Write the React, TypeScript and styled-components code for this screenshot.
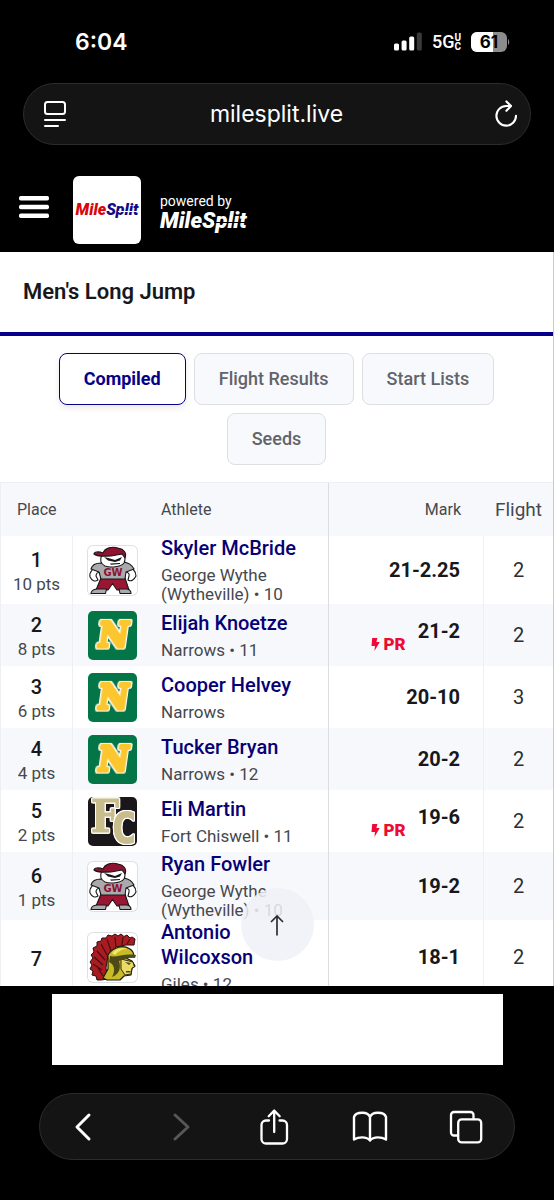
import React from "react";
import styled, { createGlobalStyle, css } from "styled-components";

const GlobalStyle = createGlobalStyle`
  *, *::before, *::after { box-sizing: border-box; }
  body {
    margin: 0;
    background: #000;
    font-family: Roboto, "Liberation Sans", sans-serif;
    color: #17181c;
  }
  button, input { font: inherit; }
`;

const Screen = styled.div`
  display: flex;
  flex-direction: column;
  height: 100vh;
  background: #000;
`;

/* ---------- phone status bar ---------- */

const StatusBar = styled.div`
  display: flex;
  align-items: center;
  justify-content: space-between;
  height: 83px;
  padding: 0 44px 0 75px;
  color: #fff;
`;

const Clock = styled.time`
  font-family: Inter, sans-serif;
  font-size: 23px;
  line-height: 28px;
  font-weight: 600;
`;

const StatusIcons = styled.div`
  display: flex;
  align-items: center;
  gap: 10px;
`;

const Network = styled.span`
  display: flex;
  align-items: center;
  font-size: 18px;
  line-height: 20px;
  font-weight: 500;
`;

const NetworkBand = styled.span`
  display: flex;
  flex-direction: column;
  font-size: 10px;
  line-height: 9px;
  font-weight: 700;
`;

/* ---------- browser chrome ---------- */

const AddressBar = styled.div`
  display: flex;
  align-items: center;
  height: 62px;
  margin: 0 23px;
  padding: 0 12px 0 19px;
  border: 1px solid #2c2c2c;
  border-radius: 31px;
  background: #141414;
`;

const Address = styled.input`
  flex: 1;
  min-width: 0;
  padding: 0 8px 0 0;
  border: 0;
  background: none;
  color: #fff;
  font-family: Inter, sans-serif;
  font-size: 23px;
  line-height: 30px;
  text-align: center;
`;

const IconButton = styled.button`
  display: flex;
  padding: 0;
  border: 0;
  background: none;
  color: #fff;
  &:disabled { color: #57575a; }
`;

const MenuButton = styled(IconButton)`
  margin-bottom: 6px;
`;

const BottomArea = styled.footer`
  flex: none;
  padding: 8px 39px 40px;
`;

const AdSlot = styled.div`
  height: 71px;
  margin: 0 12px 28px 13px;
  background: #fff;
`;

const Toolbar = styled.nav`
  display: flex;
  align-items: center;
  justify-content: space-between;
  height: 67px;
  padding: 0 31px 0 28px;
  border: 1px solid #2c2c2c;
  border-radius: 34px;
  background: #141414;
`;

/* ---------- site ---------- */

const SiteHeader = styled.header`
  flex: none;
  display: flex;
  align-items: center;
  padding: 31px 19px 8px;
`;

const LogoTile = styled.a`
  display: flex;
  align-items: center;
  justify-content: center;
  width: 68px;
  height: 68px;
  margin: 0 19px 0 24px;
  border-radius: 6px;
  background: #fff;
  text-decoration: none;
`;

const Powered = styled.div`
  display: flex;
  flex-direction: column;
  padding-top: 2px;
  color: #fff;
  font-size: 14px;
  line-height: 20px;
`;

const Wordmark = styled.span<{ $size: number; $first: string; $second: string; $cut: string }>`
  display: flex;
  font-size: ${(p) => p.$size}px;
  line-height: 20px;
  font-weight: 900;
  font-style: italic;
  color: ${(p) => p.$first};
  span {
    position: relative;
    color: ${(p) => p.$second};
  }
  span::after {
    content: "";
    position: absolute;
    inset: 11px 0 auto 12px;
    height: 1px;
    background: ${(p) => p.$cut};
  }
`;

const Page = styled.main`
  position: relative;
  flex: 1;
  min-height: 0;
  overflow: hidden;
  background: #fff;
  border-right: 1px solid #c9cacd;
`;

const TitleBar = styled.div`
  padding: 26px 23px;
  border-bottom: 4px solid #06008a;
`;

const Title = styled.h1`
  margin: 0;
  font-size: 22px;
  line-height: 28px;
  font-weight: 600;
`;

const Tabs = styled.div`
  display: flex;
  flex-wrap: wrap;
  justify-content: center;
  gap: 8px;
  padding: 17px 20px;
`;

const Tab = styled.button<{ $active?: boolean }>`
  height: 52px;
  padding: 0 24px;
  border: 1px solid #dedfe3;
  border-radius: 8px;
  background: #f8f9fd;
  color: #62646a;
  font-size: 18px;
  line-height: 24px;
  font-weight: 500;
  ${(p) =>
    p.$active &&
    css`
      border-color: #06008a;
      background: #fff;
      color: #06008a;
      font-weight: 700;
      box-shadow: 0 3px 6px rgba(0, 0, 0, 0.09);
    `}
`;

const Results = styled.table`
  width: 100%;
  border-collapse: separate;
  border-spacing: 0;
  table-layout: fixed;
  border-top: 1px solid #eeeff2;
  border-left: 1px solid #eeeff2;
  th, td { padding: 0; vertical-align: middle; }
  tr { height: 62px; }
  tbody tr:nth-child(even), thead tr { background: #f7f8fc; }
  thead tr { height: 53px; }
`;

const Col = styled.col<{ $w?: number }>`
  ${(p) => p.$w && `width: ${p.$w}px;`}
`;

const Head = styled.th<{ $align?: string; $size?: number; $divide?: boolean }>`
  color: #46484e;
  font-size: ${(p) => p.$size ?? 16}px;
  line-height: 24px;
  font-weight: 400;
  text-align: ${(p) => p.$align ?? "left"};
  ${(p) => p.$divide && "border-right: 1px solid #dcdde1;"}
  &:first-child { padding-left: 16px; }
  &:nth-child(3) { padding-right: 23px; }
`;

const PlaceCell = styled.td`
  border-right: 1px solid #eeeff2;
  text-align: center;
  font-size: 17px;
  line-height: 24px;
  color: #46484e;
`;

const PlaceText = styled.div`
  padding-top: 3px;
`;

const PlaceNumber = styled.div`
  font-size: 20px;
  font-weight: 500;
  color: #17181c;
`;

const LogoCell = styled.td`
  svg { display: block; margin-left: 15px; }
`;

const AthleteCell = styled.td`
  border-right: 1px solid #dcdde1;
`;

const AthleteName = styled.a`
  display: block;
  margin-bottom: 5px;
  padding-right: 32px;
  color: #070075;
  font-size: 20px;
  line-height: 25px;
  font-weight: 500;
  text-decoration: none;
`;

const School = styled.div`
  max-width: 144px;
  color: #46484e;
  font-size: 17px;
  line-height: 19px;
`;

const MarkCell = styled.td`
  border-right: 1px solid #eeeff2;
`;

const Mark = styled.div`
  display: flex;
  justify-content: flex-end;
  gap: 12px;
  padding-right: 23px;
  font-size: 20px;
  line-height: 24px;
  font-weight: 700;
`;

const Record = styled.span`
  display: flex;
  align-items: center;
  gap: 4px;
  margin-top: 18px;
  color: #ee0a34;
  font-size: 17px;
  line-height: 14px;
  font-weight: 900;
`;

const FlightCell = styled.td`
  text-align: center;
  font-size: 20px;
  line-height: 24px;
  color: #2c2e33;
`;

const ToTop = styled.button`
  position: absolute;
  left: 50%;
  bottom: 25px;
  display: flex;
  align-items: center;
  justify-content: center;
  width: 73px;
  height: 73px;
  margin-left: -36px;
  padding: 0;
  border: 0;
  border-radius: 50%;
  background: rgba(240, 241, 247, 0.85);
  color: #2c2e33;
`;

/* ---------- drawings ---------- */

const SignalIcon = () => (
  <svg width="28" height="19" viewBox="0 0 28 19" fill="#fff" aria-label="Signal">
    <rect x="0" y="11.5" width="5" height="7" rx="1.5" />
    <rect x="7.6" y="8.5" width="5" height="10" rx="1.5" />
    <rect x="15.2" y="4.5" width="5" height="14" rx="1.5" />
    <rect x="22.8" y="0.5" width="5" height="18" rx="1.5" fill="#3a3a3a" />
  </svg>
);

const BatteryIcon = () => (
  <svg width="39" height="20" viewBox="0 0 39 20" aria-label="Battery">
    <rect x="0" y="0" width="36" height="20" rx="6" fill="#8c8c8c" />
    <path d="M6 0H22V20H6A6 6 0 0 1 0 14V6A6 6 0 0 1 6 0Z" fill="#fff" />
    <path d="M37 7C38.6 7.6 38.6 12.4 37 13Z" fill="#8c8c8c" />
    <text x="18" y="16" textAnchor="middle" fontFamily="Inter, sans-serif" fontSize="17" fontWeight="700" fill="#000">61</text>
  </svg>
);

const ReaderIcon = () => (
  <svg width="24" height="28" viewBox="0 0 24 28" fill="none" stroke="#fff" strokeWidth="2" strokeLinecap="round">
    <rect x="2" y="2" width="20" height="12" rx="2.5" />
    <path d="M2 20H22M2 26H15" />
  </svg>
);

const ReloadIcon = () => (
  <svg width="24" height="28" viewBox="0 0 24 28" fill="none" stroke="#fff" strokeWidth="2.1" strokeLinecap="round" strokeLinejoin="round">
    <path d="M22 15.8A9.8 9.8 0 1 1 12.2 6H16.6" />
    <path d="M12.4 1.4L17 6L12.4 10.8" />
  </svg>
);

const MenuIcon = () => (
  <svg width="30" height="22" viewBox="0 0 30 22" fill="#fff">
    <rect width="30" height="4.6" rx="1.8" />
    <rect y="8.7" width="30" height="4.6" rx="1.8" />
    <rect y="17.4" width="30" height="4.6" rx="1.8" />
  </svg>
);

const BackIcon = () => (
  <svg width="36" height="30" viewBox="0 0 36 30" fill="none" stroke="currentColor" strokeWidth="3" strokeLinecap="round" strokeLinejoin="round">
    <path d="M21 3L9 15L21 27" />
  </svg>
);

const ForwardIcon = () => (
  <svg width="30" height="30" viewBox="0 0 30 30" fill="none" stroke="currentColor" strokeWidth="3" strokeLinecap="round" strokeLinejoin="round">
    <path d="M10 3L23 15L10 27" />
  </svg>
);

const ShareIcon = () => (
  <svg width="34" height="38" viewBox="0 0 34 38" fill="none" stroke="#fff" strokeWidth="2.3" strokeLinecap="round" strokeLinejoin="round">
    <path d="M12 12.5H9A4.5 4.5 0 0 0 4.5 17V31A4.5 4.5 0 0 0 9 35.5H25.5A4.5 4.5 0 0 0 30 31V17A4.5 4.5 0 0 0 25.5 12.5H22.5" />
    <path d="M17.2 24V2.6M11.7 8.2L17.2 2.6L22.7 8.2" />
  </svg>
);

const BookIcon = () => (
  <svg width="36" height="32" viewBox="0 0 36 32" fill="none" stroke="#fff" strokeWidth="2.4" strokeLinecap="round" strokeLinejoin="round">
    <path d="M18 6C16 1.5 12 1.8 10 1.8C6.5 1.8 3 3 2 6V28.5C6 26 14.5 25 18 29.5C21.5 25 30 26 34 28.5V6C33 3 29.5 1.8 26 1.8C24 1.8 20 1.5 18 6ZM18 6V29" />
  </svg>
);

const TabsIcon = () => (
  <svg width="34" height="34" viewBox="0 0 34 34" fill="none" stroke="#fff" strokeWidth="2.3" strokeLinecap="round">
    <rect x="9.2" y="9.4" width="23" height="23" rx="3.5" />
    <path d="M9 25.5H5A3 3 0 0 1 2 22.5V5A3 3 0 0 1 5 2H21.5A3 3 0 0 1 24.5 5V9" />
  </svg>
);

const ArrowUp = () => (
  <svg width="16" height="22" viewBox="0 0 16 22" fill="none" stroke="currentColor" strokeWidth="1.7">
    <path d="M8 21.5V2M2 8L8 2L14 8" />
  </svg>
);

const Bolt = () => (
  <svg width="9" height="13" viewBox="0 0 9 13" fill="currentColor">
    <path d="M1.2 0H6.4L5.4 4H8.8L3.4 13L4 8H0.5Z" />
  </svg>
);

const Frame = styled.svg<{ $plain?: boolean }>`
  width: 49px;
  height: 49px;
  border-radius: 5px;
  ${(p) => p.$plain && "background: #fff; box-shadow: 0 0 0 1px #dfe0e4;"}
`;

const OutlinedLetter = styled.text`
  font-weight: 700;
  text-anchor: middle;
  filter: drop-shadow(1px 0 #fff) drop-shadow(-1px 0 #fff) drop-shadow(0 1px #fff) drop-shadow(0 -1px #fff);
`;

const MaroonsLogo = () => (
  <Frame $plain viewBox="0 0 49 49" strokeLinejoin="round">
    <g stroke="#171717" strokeWidth="1.1">
      <path d="M13 32H37L41 44H29L24.5 37.5L20 44H8Z" fill="#9c1634" />
      <path d="M9 43H18.5L17.5 47.5H3C3 45 5 43.5 9 43ZM31 43H39C42 43.5 43 45.5 43 47.5H32Z" fill="#aaaaae" />
      <path d="M10 21C5 22 1 26 2 31C4 35 7 36 10 34L8 30C8 27 10 26 13 26ZM38 20C44 21 48 25 48 30C46 34 43 36 40 34L41 30C42 27 39 26 37 26Z" fill="#fff" />
      <path d="M13 17C8 17 4 19 3 23L11 26L13 33H37L38 26L46 23C44 19 41 17 36 16L25 20Z" fill="#aaaaae" />
      <path d="M14 9C11 14 13 18 17 20C22 22 33 21 36 17C38 13 37 10 35 7Z" fill="#fff" />
      <path d="M15 7C17 2 24 0 30 2C36 3 39 7 37 12L34 8L23 10C16 10 9 11 6 8C6 6 10 5 15 7Z" fill="#8f1230" />
    </g>
    <path d="M16 11L22 12.5L27 14L34 11L32 14.5L27 16L20 14.5ZM22 17.500L32 17V18L23 18.800Z" fill="#171717" />
    <text x="25" y="30" textAnchor="middle" fontFamily="DejaVu Sans, sans-serif" fontSize="10" fontWeight="700" fill="#8f1230">GW</text>
  </Frame>
);

const NarrowsLogo = () => (
  <Frame viewBox="0 0 49 49">
    <rect width="49" height="49" fill="#047547" />
    <OutlinedLetter
      x="29"
      y="36"
      transform="skewX(-8)"
      fontFamily="DejaVu Serif, serif"
      fontSize="33"
      fill="#fcc62f"
      stroke="#fcc62f"
      strokeWidth="4"
      strokeLinejoin="round"
    >
      N
    </OutlinedLetter>
  </Frame>
);

const ChiswellLogo = () => (
  <Frame viewBox="0 0 49 49">
    <rect width="49" height="49" fill="#191719" />
    <g fill="#c9bd8c" stroke="#c9bd8c" strokeWidth="1">
      <OutlinedLetter x="17" y="35" fontFamily="DejaVu Serif Condensed, DejaVu Serif, serif" fontSize="44">F</OutlinedLetter>
      <OutlinedLetter x="36" y="46" fontFamily="DejaVu Sans Mono, monospace" fontSize="42">C</OutlinedLetter>
    </g>
  </Frame>
);

const SpartansLogo = () => (
  <Frame $plain viewBox="0 0 49 49" strokeLinejoin="round">
    <path d="M47 6L44 4L42 5L39 2L36 3.5L33 1L30 3L27 1L24 3L20 2L18 5L14 5L13 8L9 9L9 13L5 15L6 19L3 22L5 25L2 29L4 32L2 36L5 38L4 42L8 43L9 47L13 47L20 46L18 35L20 22L28 14L38 12L46 12Z" fill="#a81c22" stroke="#2a0d0d" strokeWidth="1" />
    <path d="M15 43L10 35M14 37L5 31M15 32L6 24M17 27L9 18M19 22L13 11M23 18L19 6M28 14L27 4M34 12L35 4M39 11L42 6" stroke="#4b0d10" strokeWidth="1.2" />
    <path d="M20 22C24 15 34 11 42 16C45 18 46 22 46 24L36 24L44 28L47 33L44 35L43 42L36 43L32 47L19 47L15 45L20 36Z" fill="#c9bb26" stroke="#1d1c0c" strokeWidth="1.2" />
    <path d="M33 26L45 29L46.5 34L44 35L43 41L37 42L33 36Z" fill="#eadb68" stroke="#1d1c0c" strokeWidth="0.9" />
    <path d="M22 23C28 25 36 20 48 22L47 25C39 24 35 27 31 28C33 34 32 41 24 44C28 37 26 31 21 29ZM37 29L43 30L41 32ZM38 38L43 38L42 39.5H38Z" fill="#4d4a15" />
    <path d="M24 20C28 15 35 14 39 16C33 16 30 19 27 22Z" fill="#f1e769" />
  </Frame>
);

/* ---------- data ---------- */

type Row = {
  place: number;
  points?: string;
  name: string;
  school: string;
  logo: () => React.JSX.Element;
  mark: string;
  record?: boolean;
  flight: number;
};

const rows: Row[] = [
  { place: 1, points: "10 pts", name: "Skyler McBride", school: "George Wythe (Wytheville) • 10", logo: MaroonsLogo, mark: "21-2.25", flight: 2 },
  { place: 2, points: "8 pts", name: "Elijah Knoetze", school: "Narrows • 11", logo: NarrowsLogo, mark: "21-2", record: true, flight: 2 },
  { place: 3, points: "6 pts", name: "Cooper Helvey", school: "Narrows", logo: NarrowsLogo, mark: "20-10", flight: 3 },
  { place: 4, points: "4 pts", name: "Tucker Bryan", school: "Narrows • 12", logo: NarrowsLogo, mark: "20-2", flight: 2 },
  { place: 5, points: "2 pts", name: "Eli Martin", school: "Fort Chiswell • 11", logo: ChiswellLogo, mark: "19-6", record: true, flight: 2 },
  { place: 6, points: "1 pts", name: "Ryan Fowler", school: "George Wythe (Wytheville) • 10", logo: MaroonsLogo, mark: "19-2", flight: 2 },
  { place: 7, name: "Antonio Wilcoxson", school: "Giles • 12", logo: SpartansLogo, mark: "18-1", flight: 2 },
];

const tabs = ["Compiled", "Flight Results", "Start Lists", "Seeds"];

export default function App() {
  return (
    <Screen>
      <GlobalStyle />
      <StatusBar>
        <Clock>6:04</Clock>
        <StatusIcons>
          <SignalIcon />
          <Network>
            5G
            <NetworkBand>
              <span>U</span>
              <span>C</span>
            </NetworkBand>
          </Network>
          <BatteryIcon />
        </StatusIcons>
      </StatusBar>
      <AddressBar>
        <IconButton aria-label="Page settings"><ReaderIcon /></IconButton>
        <Address aria-label="Address" defaultValue="milesplit.live" />
        <IconButton aria-label="Reload"><ReloadIcon /></IconButton>
      </AddressBar>
      <SiteHeader>
        <MenuButton aria-label="Menu"><MenuIcon /></MenuButton>
        <LogoTile href="#home">
          <Wordmark $size={16} $first="#d6080f" $second="#140a85" $cut="#fff">Mile<span>Split</span></Wordmark>
        </LogoTile>
        <Powered>
          powered by
          <Wordmark $size={22} $first="#fff" $second="#fff" $cut="#000">Mile<span>Split</span></Wordmark>
        </Powered>
      </SiteHeader>
      <Page>
        <TitleBar><Title>Men's Long Jump</Title></TitleBar>
        <Tabs>
          {tabs.map((t, i) => <Tab key={t} $active={i === 0}>{t}</Tab>)}
        </Tabs>
        <Results>
          <colgroup>
            <Col $w={72} />
            <Col $w={88} />
            <Col />
            <Col $w={155} />
            <Col $w={69} />
          </colgroup>
          <thead>
            <tr>
              <Head colSpan={2}>Place</Head>
              <Head $divide>Athlete</Head>
              <Head $align="right">Mark</Head>
              <Head $align="center" $size={19}>Flight</Head>
            </tr>
          </thead>
          <tbody>
            {rows.map((r) => (
              <tr key={r.place}>
                <PlaceCell>
                  <PlaceText><PlaceNumber>{r.place}</PlaceNumber>{r.points}</PlaceText>
                </PlaceCell>
                <LogoCell><r.logo /></LogoCell>
                <AthleteCell>
                  <AthleteName href={`#athlete-${r.place}`}>{r.name}</AthleteName>
                  <School>{r.school}</School>
                </AthleteCell>
                <MarkCell>
                  <Mark>
                    {r.record && <Record><Bolt />PR</Record>}
                    <span>{r.mark}</span>
                  </Mark>
                </MarkCell>
                <FlightCell>{r.flight}</FlightCell>
              </tr>
            ))}
          </tbody>
        </Results>
        <ToTop aria-label="Back to top"><ArrowUp /></ToTop>
      </Page>
      <BottomArea>
        <AdSlot />
        <Toolbar>
          <IconButton aria-label="Back"><BackIcon /></IconButton>
          <IconButton aria-label="Forward" disabled><ForwardIcon /></IconButton>
          <IconButton aria-label="Share"><ShareIcon /></IconButton>
          <IconButton aria-label="Bookmarks"><BookIcon /></IconButton>
          <IconButton aria-label="Tabs"><TabsIcon /></IconButton>
        </Toolbar>
      </BottomArea>
    </Screen>
  );
}
